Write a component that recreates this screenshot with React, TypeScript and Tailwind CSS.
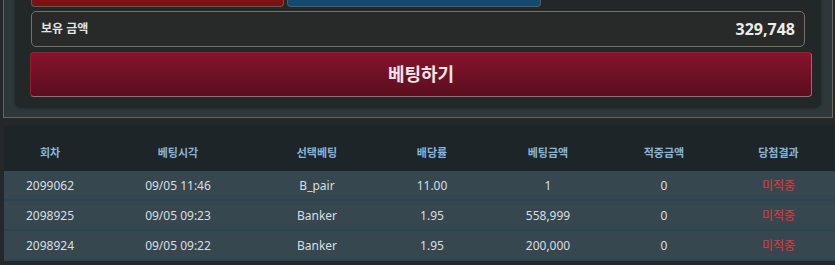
import React from 'react';

const font = { fontFamily: '"Noto Sans", "Noto Sans CJK KR", sans-serif' };

const rows = [
  { round: '2099062', time: '09/05 11:46', pick: 'B_pair', odds: '11.00', amount: '1', win: '0', result: '미적중' },
  { round: '2098925', time: '09/05 09:23', pick: 'Banker', odds: '1.95', amount: '558,999', win: '0', result: '미적중' },
  { round: '2098924', time: '09/05 09:22', pick: 'Banker', odds: '1.95', amount: '200,000', win: '0', result: '미적중' },
];

const headers = ['회차', '베팅시각', '선택베팅', '배당률', '베팅금액', '적중금액', '당첨결과'];

const cols = 'grid grid-cols-[92px_164px_114px_116px_116px_116px_1fr]';

export default function App() {
  return (
    <div className="w-[835px] h-[265px] overflow-hidden bg-[#25282a]" style={font}>
      {/* bet panel */}
      <div className="ml-[3px] mr-[2px] bg-[#2e383b] border-l border-r border-b border-[#6a6558] px-[11px] pb-[10px]">
        <div className="bg-[#222728] rounded-b-[6px] pl-[16px] pr-[10px] pb-[10px] flex flex-col shadow-[0_1px_3px_rgba(0,0,0,0.4)]">
          {/* top bet buttons (cut off) */}
          <div className="flex gap-[3px]">
            <div className="w-[253px] h-[7px] bg-[#7a1212] rounded-b-[4px] border-x border-b border-[#5c5a55]" />
            <div className="w-[254px] h-[7px] bg-[#134a6e] rounded-b-[4px] border-x border-b border-[#4d5c66]" />
          </div>

          {/* balance */}
          <div className="mt-[4px] w-[774px] h-[36px] rounded-[5px] border border-[#76716a] bg-[#282a29] flex items-center justify-between pl-[9px] pr-[9px]">
            <span className="text-[12px] font-bold text-[#e4e4e4]">보유 금액</span>
            <span className="text-[16px] font-bold text-[#ebebeb]">329,748</span>
          </div>

          {/* bet button */}
          <button className="mt-[5px] -ml-px w-[782px] h-[45px] rounded-[4px] border border-t-[#a3192b] border-l-[#a3192b] border-r-[#857570] border-b-[#857570] bg-gradient-to-b from-[#87132e] to-[#5a0e1e] text-[18px] font-bold text-[#f2e4e6]">
            베팅하기
          </button>
        </div>
      </div>

      {/* history table */}
      <div className="mt-[7px] ml-[4px]">
        <div className={`${cols} h-[46px] bg-[#1e2529] items-center pt-[11px]`}>
          {headers.map(h => (
            <div key={h} className="text-center text-[11px] font-bold text-[#86b5da]">{h}</div>
          ))}
        </div>
        {rows.map(r => (
          <div key={r.round} className={`${cols} h-[30px] pt-[2px] bg-[#37474f] border-b-2 border-[#2b4550] items-center text-[12px] text-[#d8dfe2]`}>
            <div className="text-center">{r.round}</div>
            <div className="text-center">{r.time}</div>
            <div className="text-center">{r.pick}</div>
            <div className="text-center">{r.odds}</div>
            <div className="text-center">{r.amount}</div>
            <div className="text-center">{r.win}</div>
            <div className="text-center text-[#e2373d]">{r.result}</div>
          </div>
        ))}
      </div>
    </div>
  );
}
